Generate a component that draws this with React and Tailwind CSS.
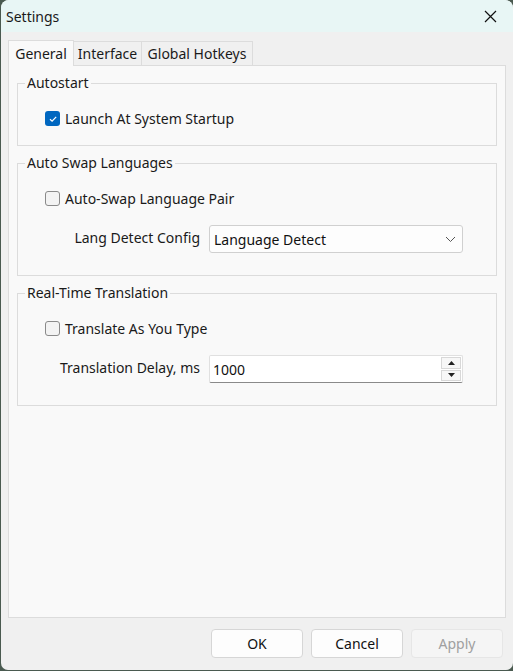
import React from "react";

const font = { fontFamily: '"Noto Sans", "Open Sans", sans-serif' };

function CheckBox({ checked, label }) {
  return (
    <div className="flex items-center gap-[5px]">
      {checked ? (
        <div className="w-[15px] h-[15px] rounded-[3px] bg-[#0067c0] flex items-center justify-center">
          <svg width="10" height="10" viewBox="0 0 10 10">
            <path d="M2 5.2 L4.1 7.2 L8.2 2.8" fill="none" stroke="white" strokeWidth="1.2" />
          </svg>
        </div>
      ) : (
        <div className="w-[15px] h-[15px] rounded-[3px] border border-[#8a8a8a] bg-[#f3f3f3]" />
      )}
      <span className="text-[14px] text-[#1a1a1a] leading-none">{label}</span>
    </div>
  );
}

function Group({ title, children, h }) {
  return (
    <div className={`relative border border-[#dcdcdc] ${h}`}>
      <span className="absolute left-[7px] -top-[10px] bg-[#f9f9f9] px-[2px] text-[14px] leading-[18px] text-[#1a1a1a]">
        {title}
      </span>
      {children}
    </div>
  );
}

export default function App() {
  return (
    <div className="w-[513px] h-[671px] bg-[#4a5a50]" style={font}>
      <div className="ml-[1px] w-[512px] h-[670px] bg-[#f0f0f0] rounded-t-[8px] rounded-b-[7px] overflow-hidden flex flex-col">
        {/* title bar */}
        <div className="h-[32px] bg-[#e8f6f5] flex items-center justify-between pl-[5px] pr-[16px]">
          <span className="text-[14px] text-[#1a1a1a]">Settings</span>
          <svg width="13" height="13" viewBox="0 0 13 13">
            <path d="M1 1 L12 12 M12 1 L1 12" stroke="#111" strokeWidth="1.2" />
          </svg>
        </div>
        {/* tabs */}
        <div className="flex items-end pl-[7px] pt-[7px] h-[33px]">
          <div className="h-[26px] w-[66px] bg-[#f9f9f9] border border-[#dcdcdc] border-b-0 flex items-center justify-center text-[14px] text-[#1a1a1a] relative z-10 -mb-px">
            General
          </div>
          <div className="h-[24px] w-[68px] bg-[#f0f0f0] border border-[#dcdcdc] border-l-0 border-b-0 flex items-center justify-center text-[14px] text-[#1a1a1a]">
            Interface
          </div>
          <div className="h-[24px] w-[111px] bg-[#f0f0f0] border border-[#dcdcdc] border-l-0 border-b-0 flex items-center justify-center text-[14px] text-[#1a1a1a]">
            Global Hotkeys
          </div>
        </div>
        {/* pane */}
        <div className="mx-[7px] h-[553px] bg-[#f9f9f9] border border-[#dcdcdc] px-[8px] pt-[17px] flex flex-col gap-[17px]">
          <Group title="Autostart" h="h-[63px]">
            <div className="pl-[27px] pt-[27px]">
              <CheckBox checked label="Launch At System Startup" />
            </div>
          </Group>
          <Group title="Auto Swap Languages" h="h-[113px]">
            <div className="pl-[27px] pt-[27px]">
              <CheckBox label="Auto-Swap Language Pair" />
            </div>
            <div className="flex items-center mt-[19px]">
              <span className="w-[191px] text-right pr-[9px] text-[14px] text-[#1a1a1a] -mt-[3px]">
                Lang Detect Config
              </span>
              <div className="w-[254px] h-[28px] bg-[#fdfdfd] border border-[#d0d0d0] rounded-[3px] flex items-center justify-between pl-[4px] pr-[6px]">
                <span className="text-[14px] text-[#111]">Language Detect</span>
                <svg width="11" height="7" viewBox="0 0 11 7">
                  <path d="M1 1 L5.5 5.5 L10 1" fill="none" stroke="#555" strokeWidth="1" />
                </svg>
              </div>
            </div>
          </Group>
          <Group title="Real-Time Translation" h="h-[113px]">
            <div className="pl-[27px] pt-[27px]">
              <CheckBox label="Translate As You Type" />
            </div>
            <div className="flex items-center mt-[19px]">
              <span className="w-[191px] text-right pr-[9px] text-[14px] text-[#1a1a1a] -mt-[3px]">
                Translation Delay, ms
              </span>
              <div className="w-[254px] h-[28px] bg-white border border-[#e0e0e0] border-b-[#8a8a8a] rounded-[2px] flex items-center justify-between pl-[3px] pr-[1px]">
                <span className="text-[14px] text-[#111] mt-[1px]">1000</span>
                <div className="flex flex-col w-[20px] h-[24px] gap-[1px]">
                  <div className="flex-1 border border-[#d8d8d8] bg-[#f7f7f7] flex items-center justify-center">
                    <svg width="7" height="4" viewBox="0 0 7 4"><path d="M0 4 L3.5 0 L7 4Z" fill="#222" /></svg>
                  </div>
                  <div className="flex-1 border border-[#d8d8d8] bg-[#f7f7f7] flex items-center justify-center">
                    <svg width="7" height="4" viewBox="0 0 7 4"><path d="M0 0 L3.5 4 L7 0Z" fill="#222" /></svg>
                  </div>
                </div>
              </div>
            </div>
          </Group>
        </div>
        {/* buttons */}
        <div className="flex justify-end gap-[8px] pr-[10px] pt-[11px]">
          <div className="w-[92px] h-[29px] bg-[#fdfdfd] border border-[#d6d6d6] rounded-[4px] flex items-center justify-center text-[14px] text-[#111]">
            OK
          </div>
          <div className="w-[92px] h-[29px] bg-[#fdfdfd] border border-[#d6d6d6] rounded-[4px] flex items-center justify-center text-[14px] text-[#111]">
            Cancel
          </div>
          <div className="w-[92px] h-[29px] bg-[#f5f5f5] border border-[#e6e6e6] rounded-[4px] flex items-center justify-center text-[14px] text-[#a0a0a0]">
            Apply
          </div>
        </div>
      </div>
    </div>
  );
}
